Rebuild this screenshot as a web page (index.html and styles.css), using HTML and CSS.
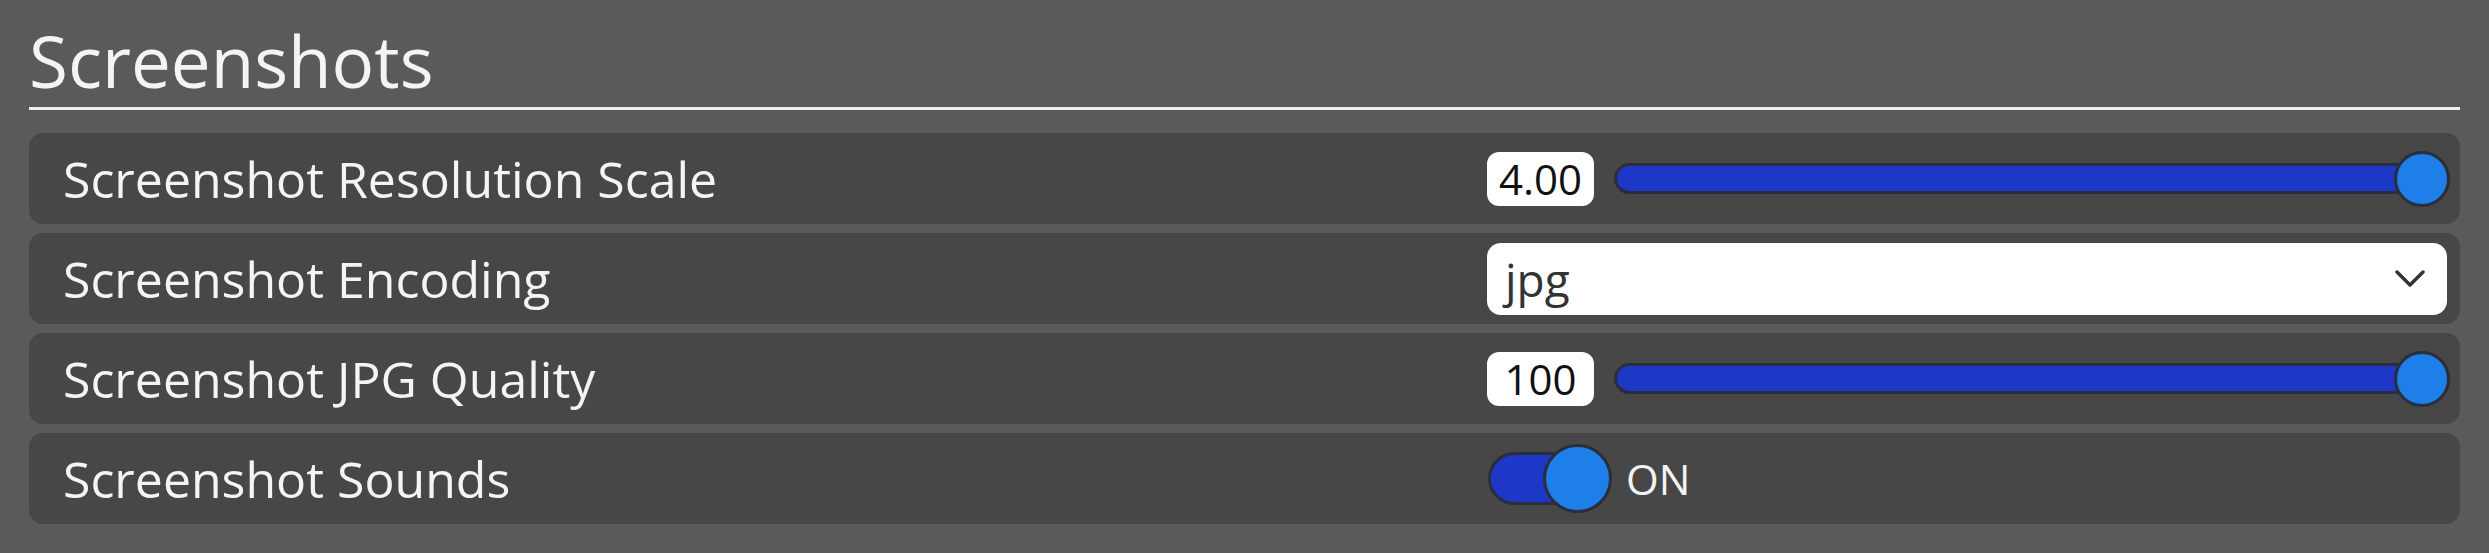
FILE: index.html
```html
<!DOCTYPE html>
<html lang="en">
<head>
<meta charset="utf-8">
<title>Screenshots</title>
<link rel="stylesheet" href="styles.css">
</head>
<body>
<div class="panel">
  <h1 class="title">Screenshots</h1>
  <div class="rows">
    <div class="row">
      <div class="label">Screenshot Resolution Scale</div>
      <div class="control slider-control">
        <div class="value">4.00</div>
        <div class="slider">
          <div class="track"></div>
          <div class="thumb"></div>
        </div>
      </div>
    </div>
    <div class="row">
      <div class="label">Screenshot Encoding</div>
      <div class="control">
        <div class="dropdown">
          <span class="dropdown-text">jpg</span>
          <svg class="chevron" width="30" height="18" viewBox="0 0 30 18"><polyline points="2,2 15,15 28,2" fill="none" stroke="#333" stroke-width="3.5" stroke-linecap="round" stroke-linejoin="round"/></svg>
        </div>
      </div>
    </div>
    <div class="row">
      <div class="label">Screenshot JPG Quality</div>
      <div class="control slider-control">
        <div class="value">100</div>
        <div class="slider">
          <div class="track"></div>
          <div class="thumb"></div>
        </div>
      </div>
    </div>
    <div class="row">
      <div class="label">Screenshot Sounds</div>
      <div class="control toggle-control">
        <div class="switch">
          <div class="switch-track"></div>
          <div class="switch-thumb"></div>
        </div>
        <span class="toggle-text">ON</span>
      </div>
    </div>
  </div>
</div>
</body>
</html>
```
FILE: styles.css
```css
html, body {
  margin: 0;
  padding: 0;
}
body {
  background: #5a5a5a;
  font-family: "Open Sans", "Noto Sans", sans-serif;
  color: #f4f4f4;
}
.panel {
  padding: 25px 29px 0 29px;
}
.title {
  margin: 0;
  font-size: 71px;
  line-height: 72px;
  font-weight: 400;
  padding-bottom: 10px;
  border-bottom: 3px solid #eeeeee;
}
.rows {
  margin-top: 23px;
  display: flex;
  flex-direction: column;
  gap: 9px;
}
.row {
  height: 91px;
  box-sizing: border-box;
  background: #474747;
  border-radius: 14px;
  display: flex;
  align-items: center;
  padding: 0 13px 0 34px;
}
.label {
  flex: 1;
  font-size: 50px;
  line-height: 60px;
}
.control {
  width: 960px;
  display: flex;
  align-items: center;
}
.slider-control {
  gap: 20px;
}
.value {
  width: 107px;
  height: 54px;
  background: #ffffff;
  border-radius: 12px;
  color: #111;
  font-size: 42px;
  line-height: 54px;
  text-align: center;
}
.slider {
  flex: 1;
  position: relative;
  height: 56px;
  margin-right: -3px;
  display: flex;
  align-items: center;
}
.track {
  width: calc(100% - 10px);
  height: 31px;
  box-sizing: border-box;
  background: #1d37c6;
  border: 3px solid #2a2d3a;
  border-radius: 16px;
}
.thumb {
  position: absolute;
  right: 0;
  top: 0;
  width: 56px;
  height: 56px;
  box-sizing: border-box;
  border-radius: 50%;
  background: #1f7fe8;
  border: 3px solid #2a2d3a;
}
.dropdown {
  flex: 1;
  height: 72px;
  background: #ffffff;
  border-radius: 14px;
  display: flex;
  align-items: center;
  justify-content: space-between;
  padding: 0 22px 0 18px;
}
.dropdown-text {
  color: #333;
  font-size: 46px;
  line-height: 60px;
}
.chevron {
  display: block;
}
.switch {
  position: relative;
  width: 125px;
  height: 69px;
}
.switch-track {
  position: absolute;
  left: 1px;
  top: 8px;
  width: 100px;
  height: 53px;
  box-sizing: border-box;
  background: #1d37c6;
  border: 3px solid #2a2d3a;
  border-radius: 27px;
}
.switch-thumb {
  position: absolute;
  right: 0;
  top: 0;
  width: 69px;
  height: 69px;
  box-sizing: border-box;
  border-radius: 50%;
  background: #1f7fe8;
  border: 3px solid #2a2d3a;
}
.toggle-text {
  margin-left: 14px;
  font-size: 42px;
  line-height: 60px;
}
```
